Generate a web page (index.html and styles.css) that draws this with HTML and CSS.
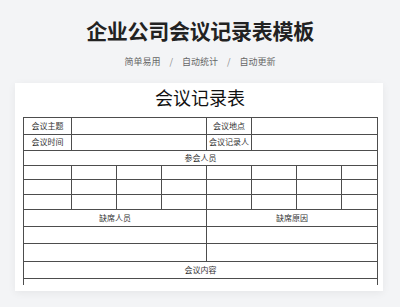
FILE: index.html
```html
<!DOCTYPE html>
<html lang="zh">
<head>
<meta charset="utf-8">
<title>企业公司会议记录表模板</title>
<link rel="stylesheet" href="styles.css">
</head>
<body>
<header class="hero">
  <h1 class="hero-title">企业公司会议记录表模板</h1>
  <p class="hero-tags"><span>简单易用</span><span class="sep">/</span><span>自动统计</span><span class="sep">/</span><span>自动更新</span></p>
</header>
<main class="card">
  <h2 class="sheet-title">会议记录表</h2>
  <table class="sheet">
    <colgroup>
      <col class="c1"><col class="cn"><col class="cn"><col class="cn"><col class="cn"><col class="cn"><col class="cn"><col class="c8">
    </colgroup>
    <tr class="r-info"><td class="lbl">会议主题</td><td colspan="3"></td><td class="lbl">会议地点</td><td colspan="3"></td></tr>
    <tr class="r-info"><td class="lbl">会议时间</td><td colspan="3"></td><td class="lbl">会议记录人</td><td colspan="3"></td></tr>
    <tr class="r-grid"><td class="lbl" colspan="8">参会人员</td></tr>
    <tr class="r-grid"><td></td><td></td><td></td><td></td><td></td><td></td><td></td><td></td></tr>
    <tr class="r-grid"><td></td><td></td><td></td><td></td><td></td><td></td><td></td><td></td></tr>
    <tr class="r-grid"><td></td><td></td><td></td><td></td><td></td><td></td><td></td><td></td></tr>
    <tr class="r-abs"><td class="lbl" colspan="4">缺席人员</td><td class="lbl" colspan="4">缺席原因</td></tr>
    <tr class="r-abs"><td colspan="4"></td><td colspan="4"></td></tr>
    <tr class="r-abs"><td colspan="4"></td><td colspan="4"></td></tr>
    <tr class="r-abs"><td class="lbl" colspan="8">会议内容</td></tr>
    <tr class="r-tail"><td colspan="8"></td></tr>
  </table>
</main>
</body>
</html>
```
FILE: styles.css
```css
html, body {
  margin: 0;
  padding: 0;
}
body {
  width: 400px;
  height: 307px;
  overflow: hidden;
  background: #f3f4f6;
  font-family: "Noto Sans CJK SC", "Noto Sans", sans-serif;
  color: #222;
}
.hero {
  padding-top: 16px;
  text-align: center;
}
.hero-title {
  margin: 0;
  font-size: 21px;
  line-height: 28px;
  font-weight: 700;
  color: #222;
  letter-spacing: -0.3px;
}
.hero-tags {
  margin: 10px 0 0;
  font-size: 9px;
  line-height: 16px;
  color: #666;
  display: flex;
  justify-content: center;
  gap: 9px;
}
.hero-tags .sep {
  color: #888;
}
.card {
  display: block;
  margin: 13px 17px 0 15px;
  height: 208px;
  background: #fff;
  box-shadow: 0 2px 8px rgba(0, 0, 0, 0.06);
  overflow: hidden;
  padding: 0 6px 0 8px;
}
.sheet-title {
  margin: 2px 0 0;
  text-align: center;
  font-size: 18px;
  line-height: 24px;
  font-weight: 400;
  color: #111;
}
.sheet {
  margin-top: 8px;
  width: 354px;
  table-layout: fixed;
  border-collapse: collapse;
}
.sheet .c1 { width: 48px; }
.sheet .cn { width: 45px; }
.sheet .c8 { width: 36px; }
.sheet td {
  border: 1px solid #4d4d4d;
  padding: 0;
  font-size: 8px;
  line-height: 10px;
  color: #333;
  text-align: center;
}
.r-info td { height: 15.5px; }
.r-grid td { height: 13.7px; }
.r-abs td { height: 16.3px; }
.r-tail td {
  height: 6px;
  border-bottom: none;
}
```
